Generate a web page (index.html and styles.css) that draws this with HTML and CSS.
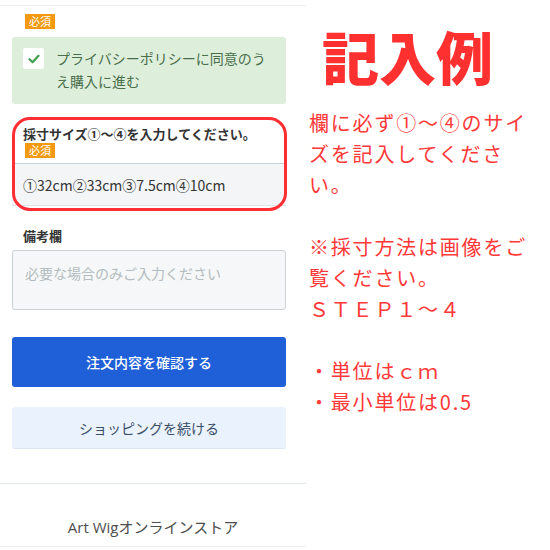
FILE: index.html
```html
<!DOCTYPE html>
<html lang="ja">
<head>
<meta charset="utf-8">
<title>記入例</title>
<link rel="stylesheet" href="styles.css">
</head>
<body>
<div class="page">
  <main class="shop">
    <div class="shop-body">
      <div class="agree-field">
        <span class="badge">必須</span>
        <label class="agree">
          <span class="checkbox">
            <svg width="12" height="10" viewBox="0 0 12 10"><path d="M1.5 5.2 L4.6 8.2 L10.5 1.8" fill="none" stroke="#3f9d4c" stroke-width="2.2" stroke-linecap="round" stroke-linejoin="round"/></svg>
          </span>
          <span class="agree-text">プライバシーポリシーに同意のうえ購入に進む</span>
        </label>
      </div>

      <div class="field field-size">
        <div class="field-label">採寸サイズ①〜④を入力してください。</div>
        <span class="badge">必須</span>
        <div class="input">①32cm②33cm③7.5cm④10cm</div>
      </div>

      <div class="field field-note">
        <div class="field-label">備考欄</div>
        <div class="textarea">必要な場合のみご入力ください</div>
      </div>

      <button class="btn btn-primary">注文内容を確認する</button>
      <button class="btn btn-secondary">ショッピングを続ける</button>
    </div>
    <footer class="footer">Art Wigオンラインストア</footer>
  </main>

  <aside class="example">
    <h1 class="example-title">記入例</h1>
    <div class="example-text">
      <div class="line">欄に必ず①〜④のサイ</div>
      <div class="line">ズを記入してくださ</div>
      <div class="line">い。</div>
      <div class="line">&nbsp;</div>
      <div class="line">※採寸方法は画像をご</div>
      <div class="line">覧ください。</div>
      <div class="line">ＳＴＥＰ１〜４</div>
      <div class="line">&nbsp;</div>
      <div class="line">・単位はｃｍ</div>
      <div class="line">・最小単位は0.5</div>
    </div>
  </aside>
</div>
</body>
</html>
```
FILE: styles.css
```css
* { box-sizing: border-box; }

html, body {
  margin: 0;
  padding: 0;
  background: #ffffff;
  font-family: "Noto Sans CJK JP", "Noto Sans", sans-serif;
}

.page {
  display: flex;
  width: 550px;
  height: 550px;
  overflow: hidden;
}

.shop {
  width: 306px;
  flex: none;
  margin-top: 5px;
  border-top: 1px solid #eceeee;
}

.shop-body {
  padding: 8px 20px 0 12px;
  display: flex;
  flex-direction: column;
  align-items: stretch;
}

.badge {
  display: inline-block;
  align-self: flex-start;
  height: 15px;
  line-height: 15px;
  padding: 0 4px;
  margin-left: 13px;
  background: #f39a10;
  color: #ffffff;
  font-size: 11px;
}

.agree-field {
  display: flex;
  flex-direction: column;
}

.agree {
  display: flex;
  align-items: flex-start;
  gap: 12px;
  margin-top: 8px;
  padding: 11px 12px 11px 11px;
  background: #ddeedb;
  border-radius: 3px;
}

.checkbox {
  flex: none;
  width: 21px;
  height: 21px;
  margin-top: 0;
  background: #ffffff;
  border-radius: 2px;
  display: flex;
  align-items: center;
  justify-content: center;
}

.agree-text {
  font-size: 14px;
  line-height: 23px;
  color: #4a6e4c;
  margin-top: -1px;
}

.field {
  display: flex;
  flex-direction: column;
  margin-top: 21px;
}

.field-size {
  position: relative;
}

.field-size::after {
  content: "";
  position: absolute;
  top: -8px;
  left: 0;
  right: -1px;
  bottom: -5px;
  border: 3px solid #ff2e33;
  border-radius: 18px;
  pointer-events: none;
}

.field-label {
  font-size: 13px;
  line-height: 18px;
  font-weight: bold;
  color: #333333;
  padding-left: 11px;
}

.field-size .badge {
  margin-left: 13px;
}

.input {
  margin-top: 5px;
  height: 43px;
  padding: 0 11px;
  display: flex;
  align-items: center;
  font-size: 14px;
  color: #333333;
  background: #f3f5f6;
  border-top: 1px solid #c9d2d7;
  border-bottom: 1px solid #dde3e6;
}

.textarea {
  margin-top: 5px;
  height: 60px;
  padding: 11px 12px;
  font-size: 14px;
  line-height: 22px;
  color: #b3bcc0;
  background: #f5f7f8;
  border: 1px solid #c9d3d7;
  border-radius: 3px;
}

.btn {
  display: block;
  width: 100%;
  border: none;
  border-radius: 3px;
  font-family: "Noto Sans CJK JP", "Noto Sans", sans-serif;
  font-size: 14px;
  cursor: pointer;
}

.btn-primary {
  margin-top: 27px;
  height: 50px;
  background: #1f5fd8;
  color: #ffffff;
  font-weight: 500;
}

.btn-secondary {
  margin-top: 20px;
  height: 42px;
  background: #eaf2fd;
  color: #3a4d68;
  border-bottom: 1px solid #dbe5f1;
}

.footer {
  margin-top: 34px;
  border-top: 1px solid #e2e7e7;
  border-bottom: 1px solid #eceeee;
  padding: 33px 0 9px;
  text-align: center;
  font-family: "Open Sans", "Noto Sans CJK JP", sans-serif;
  font-size: 15px;
  line-height: 20px;
  color: #4d4d4d;
}

.example {
  flex: 1;
  padding-left: 3px;
  color: #ff3838;
}

.example-title {
  margin: 27px 0 0 13px;
  font-size: 57px;
  line-height: 57px;
  font-weight: 900;
  color: #ff3030;
  letter-spacing: 0;
}

.example-text {
  margin-top: 23px;
  font-size: 20px;
  line-height: 31px;
  letter-spacing: 1.8px;
  white-space: nowrap;
}
```
